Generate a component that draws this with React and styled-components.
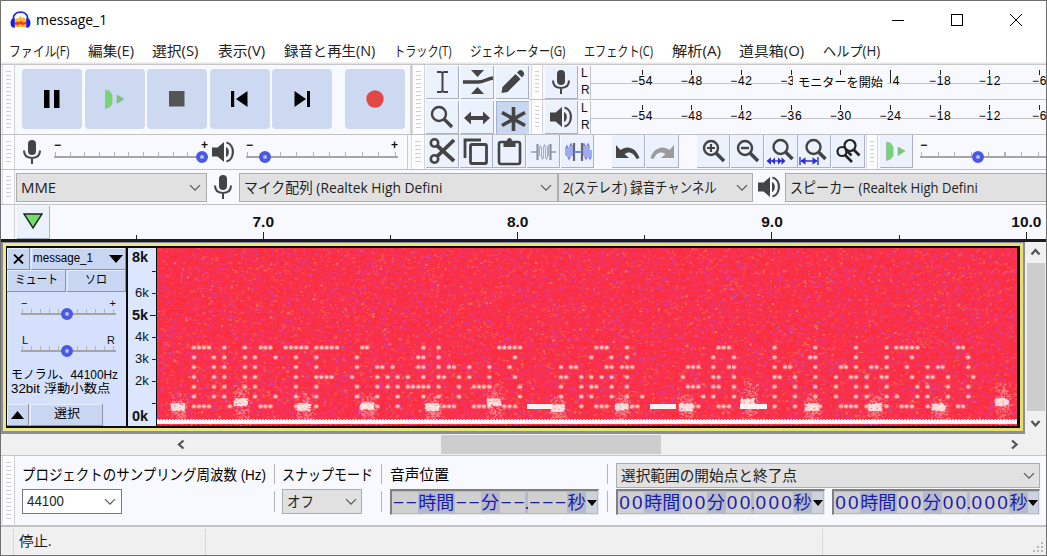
import React, { useLayoutEffect, useRef, useState, useMemo } from "react";
import styled, { createGlobalStyle, css } from "styled-components";

const GlobalStyle = createGlobalStyle`
  html, body { margin: 0; padding: 0; overflow: hidden; background: #fff; }
  * { box-sizing: border-box; }
  body { font-family: "Open Sans", "Noto Sans CJK JP", sans-serif; color: #1a1a1a; }
`;

const gothic = css`font-family: "Liberation Sans", "Noto Sans CJK JP", sans-serif;`;

/* ---------- text squeezed or stretched to a given width ---------- */
const FitBox = styled.span`
  display: inline-block;
  flex: none;
  width: ${(p) => p.$w}px;
  white-space: pre;
  line-height: 1.2;
`;
const FitInner = styled.span`
  display: inline-block;
  transform-origin: 0 50%;
`;
function Fit({ w, children, className }) {
  const ref = useRef(null);
  const [scale, setScale] = useState(1);
  useLayoutEffect(() => {
    const natural = ref.current.offsetWidth;
    if (natural) setScale(w / natural);
  }, [w, children]);
  return (
    <FitBox $w={w} className={className}>
      <FitInner ref={ref} style={{ transform: `scaleX(${scale})` }}>{children}</FitInner>
    </FitBox>
  );
}

/* ---------- window frame ---------- */
const Window = styled.div`
  position: relative;
  width: 1047px;
  height: 556px;
  display: flex;
  flex-direction: column;
  overflow: hidden;
  background: #fff;
  &::after {
    content: "";
    position: absolute;
    inset: 0;
    border: 1px solid #6e6e6e;
    pointer-events: none;
  }
`;
const TitleBar = styled.header`
  flex: none;
  height: 40px;
  display: flex;
  align-items: center;
  padding-left: 10px;
`;
const Title = styled(Fit)`
  font-size: 14.5px;
  margin-left: 5px;
  color: #000;
`;
const Controls = styled.div`
  margin-left: auto;
  display: flex;
  gap: 47px;
  padding-right: 25px;
`;
const MenuBar = styled.nav`
  flex: none;
  height: 22px;
  display: flex;
  align-items: center;
  gap: 18.7px;
  padding-left: 9px;
  font-size: 14px;
  color: #222;
`;
const Shade = styled.div`
  flex: none;
  height: 3px;
  background: linear-gradient(#fafafa, #e2e2e2 55%, #b8b8b8);
`;

/* ---------- toolbars ---------- */
const Strip = styled.div`
  flex: none;
  display: flex;
  height: ${(p) => p.$h}px;
  background: #f8f9ff;
  border-bottom: ${(p) => p.$line || 1}px solid #c2c2c2;
  overflow: hidden;
`;
const Handle = styled.div`
  flex: none;
  width: ${(p) => p.$w || 13}px;
  margin-left: ${(p) => p.$ml || 0}px;
  background: #fdfdff;
  border-left: 1px solid #dcdcdc;
  border-right: 1px solid #d4d4d4;
  padding: 6px 3px 5px;
  &::before {
    content: "";
    display: block;
    height: 100%;
    background: repeating-linear-gradient(#cfcfcf 0 1px, transparent 1px 4px);
  }
`;
const Transport = styled.div`
  flex: none;
  display: flex;
  align-items: center;
  gap: 2.5px;
  width: 397px;
  padding: 0 0 1px 7px;
  border-right: 2px solid #d0d0d0;
`;
const TransportButton = styled.button`
  width: 60px;
  height: 60px;
  padding: 0;
  border: 0;
  border-radius: 4px;
  background: #cdd9f1;
  display: grid;
  place-items: center;
  margin-left: ${(p) => (p.$gap ? 10 : 0)}px;
`;
const ToolGrid = styled.div`
  flex: none;
  display: grid;
  grid-template-columns: repeat(3, 33px);
  grid-auto-rows: 33px;
  gap: 2px;
  padding: 1px 0 0 1px;
`;
const ToolButton = styled.button`
  flex: none;
  width: 33px;
  height: 33px;
  padding: 0;
  margin-left: ${(p) => p.$ml || 0}px;
  margin-top: ${(p) => p.$mt || 0}px;
  display: grid;
  place-items: center;
  background: ${(p) => (p.$on ? "#c9d6f0" : "#ecf1fe")};
  border: 0 solid #a8b1c9;
  border-width: ${(p) => (p.$on ? "1px 0 0 1px" : "0 1px 1px 0")};
`;

/* ---------- level meters ---------- */
const Meters = styled.div`
  flex: 1;
  min-width: 0;
  display: flex;
  flex-direction: column;
`;
const Meter = styled.div`
  height: 35px;
  display: flex;
  border-bottom: 1px solid #c2c2c2;
`;
const Channels = styled.div`
  width: 16px;
  height: 34px;
  padding: 0 0 1px 3px;
  display: flex;
  flex-direction: column;
  justify-content: space-between;
  font: 12px/16px "Liberation Sans", sans-serif;
  color: #111;
`;
const Scale = styled.div`
  position: relative;
  flex: 1;
  display: flex;
  margin-top: 1px;
  padding-left: 26px;
  border-left: 1px solid #c4c4c4;
  background: linear-gradient(transparent 17px, #c6c6c6 17px 18px, transparent 18px);
`;
const Mark = styled.div`
  position: relative;
  flex: none;
  width: 49.7px;
  padding: 8px ${(p) => (p.$side === "left" ? 7 : 0)}px 0 ${(p) => (p.$side === "right" ? 13 : 1)}px;
  text-align: center;
  font: 12px/14px "Liberation Sans", sans-serif;
  letter-spacing: .6px;
  color: #000;
  &::before {
    content: "";
    position: absolute;
    left: 25px;
    top: 4px;
    width: 1px;
    height: ${(p) => (p.$side === "right" ? 13 : 5)}px;
    background: #222;
  }
`;
const MonitorHint = styled.div`
  position: absolute;
  left: 202px;
  top: 9px;
  width: 94px;
  height: 16px;
  padding-left: 5px;
  display: flex;
  align-items: center;
  background: #fafbff;
  font-size: 12px;
  color: #000;
`;

/* ---------- sliders ---------- */
const SliderBox = styled.div`
  flex: none;
  width: ${(p) => p.$w}px;
  margin-left: ${(p) => p.$ml || 0}px;
  padding-top: ${(p) => p.$pt || 0}px;
`;
const Ends = styled.div`
  display: flex;
  justify-content: space-between;
  padding: 0 ${(p) => p.$inset}px;
  height: 12px;
  margin-bottom: ${(p) => (p.$thin ? 0 : 1)}px;
  font: bold 12px/12px "Liberation Sans", sans-serif;
  font-weight: ${(p) => (p.$thin ? 400 : 700)};
  font-size: ${(p) => (p.$thin ? 11 : 12)}px;
  color: #111;
`;
const Groove = styled.div`
  position: relative;
  height: 6px;
  border-bottom: 2px solid #a5a5a5;
  background: repeating-linear-gradient(90deg, transparent 0 1px, #b4b4b4 1px 2px, transparent 2px ${(p) => p.$step}px);
`;
const Knob = styled.i`
  position: absolute;
  left: ${(p) => p.$at - 6}px;
  top: -1px;
  width: 12px;
  height: 12px;
  border-radius: 50%;
  border: 4px solid #4a58e6;
  background: #b9bbe0;
`;
function Slider({ w, ml, pt, at, step, ends = ["−", "+"], inset = 0, thin }) {
  return (
    <SliderBox $w={w} $ml={ml} $pt={pt}>
      <Ends $inset={inset} $thin={thin}>{ends.map((e) => <span key={e}>{e}</span>)}</Ends>
      <Groove $step={step}><Knob $at={at} /></Groove>
    </SliderBox>
  );
}
const Mixer = styled.div`
  flex: none;
  display: flex;
  width: 393px;
  border-right: 1px solid #cbcbcb;
`;
const IconCell = styled.div`
  flex: none;
  width: ${(p) => p.$w}px;
  display: grid;
  place-items: center;
`;

/* ---------- combo boxes ---------- */
const ComboBox = styled.div`
  flex: none;
  width: ${(p) => p.$w}px;
  height: ${(p) => p.$h || 29}px;
  margin-left: ${(p) => p.$ml || 0}px;
  margin-top: ${(p) => p.$mt || 0}px;
  padding: 0 ${(p) => p.$pr || 5}px 0 ${(p) => p.$pl || 4}px;
  display: flex;
  align-items: center;
  justify-content: space-between;
  background: ${(p) => (p.$white ? "#fff" : "#e1e1e1")};
  border: 1px solid ${(p) => (p.$white ? "#7a7a7a" : "#adadad")};
  font-size: ${(p) => p.$fs || 14.5}px;
  color: #222;
`;
const Chevron = () => (
  <svg width="12" height="8" viewBox="0 0 12 8"><path d="M1 1.2l5 5 5-5" fill="none" stroke="#555" strokeWidth="1.2" /></svg>
);
function Combo({ text, tw, arrow = true, ...rest }) {
  return (
    <ComboBox {...rest}>
      <Fit w={tw}>{text}</Fit>
      {arrow && <Chevron />}
    </ComboBox>
  );
}

/* ---------- timeline ---------- */
const Timeline = styled.div`
  flex: none;
  display: flex;
  height: 37px;
  background: #f8f9ff;
  border-bottom: 3px solid #1c1c20;
`;
const PinCell = styled.div`
  flex: none;
  width: 50px;
  padding: 1px 0 0 2px;
  margin-left: 14px;
  border-left: 1px solid #d4d4d4;
`;
const Seconds = styled.div`
  flex: 1;
  display: flex;
  overflow: hidden;
  padding-left: 8.500px;
`;
const Second = styled.div`
  position: relative;
  flex: none;
  width: 127.2px;
  height: 34px;
  padding-top: 7px;
  text-align: center;
  font: bold 15.5px/20px "Liberation Sans", sans-serif;
  color: #111;
  &::after {
    content: "";
    position: absolute;
    left: 63px;
    bottom: 0;
    width: 1px;
    height: ${(p) => (p.$major ? 7 : 4)}px;
    background: #222;
  }
`;

/* ---------- track ---------- */
const Workspace = styled.div`
  flex: none;
  height: 193px;
  display: flex;
  background: #f0f0f0;
`;
const TrackFrame = styled.div`
  flex: none;
  width: 1025px;
  height: 192px;
  border: solid #8d8d99;
  border-width: 1px 2px 3px 3px;
`;
const TrackGlow = styled.div`
  height: 100%;
  padding: 3px 3px 3px 3px;
  background: linear-gradient(135deg, #eee98a, #e6dd6c);
`;
const Track = styled.div`
  height: 100%;
  display: flex;
  background: #0c0c0c;
  padding: 2px 1px 2px 1px;
`;
const Panel = styled.div`
  flex: none;
  width: 119px;
  height: 178px;
  background: #d5e0fd;
  display: flex;
  flex-direction: column;
  color: #000;
`;
const PanelRow = styled.div`
  display: flex;
  gap: 1px;
  height: 22px;
  margin-top: ${(p) => p.$mt || 0}px;
`;
const PanelButton = styled.button`
  flex: none;
  width: ${(p) => p.$w}px;
  height: 22px;
  padding: 0 ${(p) => p.$pad || 0}px;
  border: 0 solid #8d94a6;
  border-width: 0 1px 1px 0;
  box-shadow: inset 1px 1px 0 #e6edff;
  background: #c9d6f2;
  display: flex;
  align-items: center;
  justify-content: ${(p) => (p.$spread ? "space-between" : "center")};
  font-size: 12px;
  color: #000;
  ${gothic}
`;
const Info = styled.div`
  ${gothic}
  display: flex;
  flex-direction: column;
  padding: 16px 0 0 4px;
  font-size: 12px;
  line-height: 14px;
`;
const InfoLine = styled(Fit)`
  height: 14px;
  line-height: 14px;
`;
const Ruler = styled.div`
  flex: none;
  width: 28px;
  height: 178px;
  margin: 0 1px 0 2px;
  background: #dde6ff;
  overflow: hidden;
`;
const Freq = styled.div`
  position: relative;
  height: ${(p) => p.$h}px;
  line-height: ${(p) => p.$lh || p.$h}px;
  font-family: "Liberation Sans", sans-serif;
  font-size: ${(p) => (p.$bold ? 14.5 : 13)}px;
  font-weight: ${(p) => (p.$bold ? 700 : 400)};
  padding-left: ${(p) => (p.$bold ? 4 : 7)}px;
  color: #111;
  &::after {
    content: "";
    display: ${(p) => (p.$tick ? "block" : "none")};
    position: absolute;
    right: 0;
    top: 11px;
    width: ${(p) => (p.$bold ? 6 : 4)}px;
    height: 1px;
    background: #222;
  }
`;
const ScrollColumn = styled.div`
  flex: none;
  width: 21px;
  margin-left: 1px;
  display: flex;
  flex-direction: column;
  align-items: center;
  padding: 5px 2px 6px 0;
`;
const ThumbV = styled.div`
  width: 18px;
  flex: 1;
  margin: 5px 0 7px;
  background: #cdcdcd;
`;
const ScrollRow = styled.div`
  flex: none;
  height: 21px;
  display: flex;
  align-items: center;
  padding: 0 27px 1px 176px;
  background: #f0f0f0;
  border-bottom: 1px solid #c6c6c6;
`;
const ThumbH = styled.div`
  width: 220px;
  height: 19px;
  margin: 0 auto 0 254px;
  background: #cdcdcd;
`;

/* ---------- selection bar ---------- */
const Group = styled.section`
  ${gothic}
  flex: none;
  width: ${(p) => p.$w}px;
  padding: 7px 0 0 ${(p) => p.$pl}px;
  display: flex;
  flex-direction: column;
  font-size: 15px;
  color: #000;
`;
const GroupLabel = styled.div`
  height: 24px;
  display: flex;
  align-items: center;
`;
const GroupFields = styled.div`
  display: flex;
  gap: 7px;
  margin-top: ${(p) => (p.$tight ? 1 : 2)}px;
`;
const Divider = styled.div`
  flex: none;
  width: 1px;
  height: 48px;
  margin-top: 8px;
  background: linear-gradient(#b4b4b8 20px, transparent 20px 27px, #b4b4b8 27px);
`;
const TimeBox = styled.div`
  flex: none;
  display: flex;
  align-items: center;
  width: ${(p) => p.$w}px;
  height: 26px;
  padding: 0 1px 0 0;
  border: solid;
  border-width: 2px 1px 1px 2px;
  border-color: #808080 #e6e6e6 #e6e6e6 #808080;
  background: #b4bac9;
`;
const Digits = styled.span`
  width: ${(p) => p.$n * 12.9}px;
  height: 21px;
  display: flex;
  justify-content: space-around;
  background: #d0d0d0;
  font: 19px/22px "Liberation Sans", sans-serif;
  color: #1a1aae;
`;
const Unit = styled.span`
  width: ${(p) => p.$w}px;
  display: flex;
  justify-content: center;
  ${gothic}
  font-size: 18px;
  line-height: 20px;
  color: #1a1aae;
`;
const Drop = styled.span`
  flex: 1;
  height: 21px;
  display: grid;
  place-items: center;
  background: #cdd2df;
`;
function TimeField({ d, w }) {
  const cells = (n) => <Digits $n={n}>{Array.from({ length: n }, (_, i) => <span key={i}>{d}</span>)}</Digits>;
  return (
    <TimeBox $w={w}>
      {cells(2)}<Unit $w={37}>時間</Unit>{cells(2)}<Unit $w={19}>分</Unit>
      {cells(2)}<Unit $w={3}>.</Unit>{cells(3)}<Unit $w={19}>秒</Unit>
      <Drop><svg width="10" height="6"><path d="M0 0h10L5 6z" fill="#000" /></svg></Drop>
    </TimeBox>
  );
}
const StatusBar = styled.footer`
  flex: 1;
  display: flex;
  align-items: flex-start;
  background: #f0f0f0;
  font-size: 14px;
  padding-top: 2px;
`;
const StatusCell = styled.div`
  width: ${(p) => p.$w}px;
  height: 25px;
  padding-left: 5px;
  display: flex;
  align-items: center;
  border-right: 1px solid #d7d7d7;
`;
const Grip = styled.div`
  margin: 13px 3px 0 auto;
  line-height: 0;
`;

/* ---------- icons ---------- */
const INK = "#444";
const Mic = () => (
  <svg width="20" height="26" viewBox="0 0 20 26">
    <rect x="6" y="1" width="8" height="15" rx="4" fill={INK} />
    <path d="M2 11.500c0 5 3.400 7.400 8 7.400s8-2.400 8-7.400M10 19v6" fill="none" stroke={INK} strokeWidth="2" />
  </svg>
);
const Speaker = () => (
  <svg width="24" height="24" viewBox="0 0 24 24">
    <path d="M1 7.500h5.500L13 2v20l-6.500-5.500H1z" fill={INK} />
    <path d="M15.500 2.500c8.500 2 8.500 17 0 19" fill="none" stroke={INK} strokeWidth="2.200" />
    <path d="M15 7v10c3.800-1.500 3.800-8.500 0-10" fill={INK} />
  </svg>
);
const Svg = ({ children, s = 30, w }) => (
  <svg width={w || s} height={s} viewBox={`0 0 ${w || s} ${s}`} fill="none" stroke={INK}>{children}</svg>
);
const lens = <><circle cx="13" cy="12" r="7" strokeWidth="2.400" /><path d="M18 17l8 8" strokeWidth="3.600" /></>;
const icons = {
  ibeam: <Svg><path d="M10 5h4l1.500 1L17 5h4M15.500 6v18M10 25h4l1.500-1 1.500 1h4" strokeWidth="2" /></Svg>,
  envelope: <Svg w={33}><path d="M10 3h13l-6.500 7zM10 27h13l-6.500-7z" fill={INK} stroke="none" /><path d="M2 15h15c6 0 8-3 15-4" strokeWidth="3.400" /></Svg>,
  draw: <Svg><path d="M4.500 26l1-6L18.500 7l5 5-13 13zM20 5.500l2.500-2.200c2-1 5.500 2 4.500 4.500L25 10.500z" fill={INK} stroke="none" /></Svg>,
  zoom: <Svg><circle cx="12" cy="12" r="7" strokeWidth="2.400" /><path d="M17 17l8 8" strokeWidth="3.400" /></Svg>,
  shift: <Svg><path d="M2 16l7-6.500v4.500h12V9.500l7 6.500-7 6.500V18H9v4.500z" fill={INK} stroke="none" /></Svg>,
  multi: <Svg><path d="M15.500 4v24M4 9.500l23 13M27 9.500l-23 13" strokeWidth="3.600" /></Svg>,
  cut: <Svg><circle cx="7.500" cy="7" r="3.700" strokeWidth="2.600" /><circle cx="7.500" cy="23" r="3.700" strokeWidth="2.600" /><path d="M10 9.500L27 25M10 20.500L27 4" strokeWidth="3.800" /></Svg>,
  copy: <Svg><path d="M4 22V4h16" strokeWidth="2.800" /><rect x="9.500" y="8.500" width="16" height="19" rx="1.500" strokeWidth="2.800" /></Svg>,
  paste: <Svg><rect x="5" y="6" width="21" height="22" rx="2" strokeWidth="2.600" /><path d="M9.500 11V5h3.500c0-4 5-4 5 0h3.500v6z" fill={INK} stroke="none" /></Svg>,
  trim: <Svg w={32}><path d="M4 16h6m13 0h6" stroke="#a9aec7" strokeWidth="2" /><path d="M10.500 8v16M23.500 8v16" stroke="#909298" strokeWidth="2.200" /><path d="M12.500 20v-8l1-2 1 2v9l1 2 1-2v-10l1-2 1 2v10l1 2 1-2v-10l1-2v11" stroke="#a9aec7" strokeWidth="1.100" /></Svg>,
  silence: <Svg w={32}><path d="M5 20v-8l1-2 1 2v9l1 2 1-2V10l1-2 1 2v10M22 20V10l1-2 1 2v11l1 2 1-2V10l1-2 1 2v11l1 2 1-2v-7" stroke="#7485ea" strokeWidth="1.300" /><path d="M13 7v18M21 7v18" stroke="#666" strokeWidth="2.200" /><path d="M13 16h8" stroke="#7485ea" strokeWidth="2" /></Svg>,
  undo: <Svg><path d="M3 9v13h13l-4.500-4c4-3 9-2 12 5l3-1C23 11 13.500 9 7.500 14z" fill={INK} stroke="none" /></Svg>,
  redo: <Svg><path d="M27 9v13H14l4.500-4c-4-3-9-2-12 5l-3-1C7 11 16.500 9 22.500 14z" fill="#9b9b9b" stroke="none" /></Svg>,
  zoomIn: <Svg>{lens}<path d="M9 12h8M13 8v8" strokeWidth="2.200" /></Svg>,
  zoomOut: <Svg>{lens}<path d="M9 12h8" strokeWidth="2.400" /></Svg>,
  zoomSel: <Svg w={32} s={32}><circle cx="15.500" cy="12" r="7" strokeWidth="2.400" /><path d="M20.500 17l7 7" strokeWidth="3.600" /><path d="M5 26h13" stroke="#2e2ed0" strokeWidth="1.400" /><path d="M1.500 26l4.500-3.700v7.400zM10 22.300v7.400L6.500 26zM13 22.300v7.400l3.500-3.700zM16.500 22.300l4 3.700-4 3.700z" fill="#2e2ed0" stroke="none" /></Svg>,
  zoomFit: <Svg w={32} s={32}><circle cx="15.500" cy="12" r="7" strokeWidth="2.400" /><path d="M20.500 17l7 7" strokeWidth="3.600" /><path d="M2 22v8M20 22v8M3 26h16" stroke="#2e2ed0" strokeWidth="1.400" /><path d="M2.500 26l5-3.700v7.400zM19.500 26l-5-3.700v7.400z" fill="#2e2ed0" stroke="none" /></Svg>,
  zoomToggle: <Svg><circle cx="17" cy="9.500" r="5.500" stroke="#222" strokeWidth="2.200" /><circle cx="9" cy="15.500" r="4.500" stroke="#222" strokeWidth="2.200" /><path d="M20.500 13.500l6 6M12 19l7 7M12.500 13.500l6 6" stroke="#222" strokeWidth="2.700" /></Svg>,
};
const PlayPair = () => (
  <svg width="22" height="20" viewBox="0 0 22 20">
    <path d="M1.500 1l4 1 2.500 4v9l-2.500 3-4 1.500z" fill="#76d573" stroke="#9db89d" strokeWidth=".8" />
    <path d="M13 6l7 4-7 4.500z" fill="#76c873" stroke="#93b193" strokeWidth=".6" />
  </svg>
);
const AppLogo = () => (
  <svg width="21" height="18" viewBox="0 0 21 18">
    <path d="M4.500 10l2-3 1.500 1 2-3 2 2 2-1 2.500 4-.5 6H5z" fill="#ffb52e" />
    <path d="M4.500 12l3-1.500 2 1 1.500-2 2 2 3.500-.5v2l-4 1-2-1-3 1-3-.5z" fill="#f0361c" />
    <path d="M3.300 9C3 3 6.500 1.200 10.500 1.200S18 3 17.700 9" fill="none" stroke="#1e2be0" strokeWidth="1.700" />
    <path d="M4.800 7.200v9.500C2 17 .5 15 .5 12s1.500-5 4.300-4.800zM16.200 7.200v9.500c2.800.3 4.300-1.700 4.300-4.700s-1.500-5-4.300-4.800z" fill="#1420dc" />
  </svg>
);

/* ---------- spectrogram ---------- */
const SpectroSvg = styled.svg`
  flex: none;
  display: block;
  background: #fa3046;
`;
const dotRows = [
  [[160, [102,117,132,147,193,255,302,316,331,377,393,408,424,439,469,485,500,515,531,607,621,790,836]], [440, [178,193,209,224,240,469,485,500,561,836,851,867]], [740, [104,226,348,440,469,485,500,516,532,654,669]]],
  [[160, [102,162,193,255,285,347,408,469,591,775,790,836]], [440, [225,454,514,561,820,882]], [740, [104,211,226,348,440,516,685]]],
  [[160, [102,162,193,255,285,408,469,591,652,667,698,775,790,836]], [440, [27,42,88,148,209,363,393,408,500,515,546,561,577,744,759,775,820,867,882]], [740, [104,135,150,226,303,318,348,394,410,440,501,563,594,608,685]]],
  [[160, [102,162,193,255,285,408,469,484,500,515,576,652,683,713,744,790,836]], [440, [12,57,88,148,225,363,378,424,454,485,515,561,729,820,836,882]], [740, [104,119,165,226,288,333,348,380,425,440,516,563,578,624,700]]],
  [[160, [102,162,193,255,285,408,469,591,652,683,713,744,759,775,790,805,836]], [440, [57,102,117,132,148,240,363,424,454,469,515,561,744,759,775,820,836,882]], [740, [104,165,226,288,348,380,440,532,563,624,685]]],
  [[160, [102,162,193,285,347,408,469,591,652,713,790,836]], [440, [57,240,363,424,454,515,561,607,790,820,882]], [740, [104,165,226,288,348,380,440,471,532,563,624,685]]],
  [[160, [102,117,132,147,210,302,316,331,408,469,607,621,636,652,713,805,836]], [440, [12,27,42,102,117,132,148,193,209,225,424,469,485,500,577,592,759,775,836,851,867]], [740, [104,165,240,303,318,333,348,380,440,485,500,516,563,654,669]]],
];
const rowY = [99.5, 109.3, 119, 129, 138.700, 148.500, 158.300];
const bursts = [[178,407],[241,402],[304,407],[367,406],[432,407],[494,402],[558,408],[622,407],[686,407],[748,402],[812,407],[875,407],[939,407],[1002,402]];

function Spectrogram() {
  const layers = useMemo(() => {
    let seed = 20417;
    const rnd = () => ((seed = (seed * 1664525 + 1013904223) % 4294967296) / 4294967296);
    const make = (n, maxW, tall = 0.5) => {
      let d = "";
      for (let i = 0; i < n; i++) {
        const x = (rnd() * 860).toFixed(1), y = (rnd() * 178).toFixed(1), w = (1 + rnd() * maxW).toFixed(1);
        const h = rnd() < tall ? 2 : 1.2;
        d += `M${x} ${y}h${w}v${h}h-${w}z`;
      }
      return d;
    };
    const spray = bursts.map(([x, y]) => {
      const high = y < 405;
      let d = "";
      for (let i = 0; i < 170; i++) {
        const px = x - 157 + (rnd() + rnd() - 1) * 10;
        const py = y - 247 + (rnd() + rnd() - 1) * (high ? 26 : 16);
        d += `M${px.toFixed(1)} ${py.toFixed(1)}h1.600v1h-1.600z`;
      }
      let c = "";
      for (let i = 0; i < 110; i++) {
        const px = x - 158 + (rnd() - 0.5) * 13;
        const py = y - 248.500 + (rnd() - 0.5) * 7;
        c += `M${px.toFixed(1)} ${py.toFixed(1)}h1.800v1.300h-1.800z`;
      }
      return [d, c];
    });
    return {
      noise: [
        ["#ef3470", make(8500, 2.800), 0.7],
        ["#ff2b34", make(6500, 3), 0.8],
        ["#f9624c", make(3600, 2.200), 0.65],
        ["#e03a98", make(3600, 1.800), 0.75],
        ["#cb40d0", make(1100, 1.400), 0.8],
        ["#f98c68", make(400, 1.800), 0.7],
        ["#8a6cf0", make(70, 1), 0.9],
      ],
      spray,
    };
  }, []);
  return (
    <SpectroSvg width="860" height="178" viewBox="0 0 860 178">
      {layers.noise.map(([c, d, o]) => <path key={c} d={d} fill={c} opacity={o} />)}
      {dotRows.map((segs, r) => segs.map(([origin, xs]) => xs.map((x) => {
        const cx = origin + x / 3 - 157;
        return (
          <g key={`${r}-${origin}-${x}`}>
            <ellipse cx={cx} cy={rowY[r]} rx="2.700" ry="2.600" fill="#fb8a86" opacity=".6" />
            <ellipse cx={cx} cy={rowY[r]} rx="1.800" ry="1.500" fill="#fcd6d0" opacity=".85" />
          </g>
        );
      })))}
      {layers.spray.map(([d, c], i) => (
        <g key={i}><path d={d} fill="#fdb4ac" opacity=".6" /><path d={c} fill="#fff2ee" opacity=".85" /></g>
      ))}
      <path d="M370 156h25v5h-25zM493 156h26v5h-26zM583 156h27v5H583z" fill="#fdf2f0" />
      <path d="M0 171.500h860" stroke="#fbd0cc" strokeDasharray="2 1" />
      <path d="M0 174h860" stroke="#fdf4f4" strokeWidth="4" />
      <path d="M0 177.500h860" stroke="#b81c2c" strokeDasharray="3 2" />
    </SpectroSvg>
  );
}

const menus = [["ファイル(F)", 60], ["編集(E)", 46], ["選択(S)", 46.500], ["表示(V)", 47.500], ["録音と再生(N)", 91.500], ["トラック(T)", 57.500], ["ジェネレーター(G)", 95], ["エフェクト(C)", 69], ["解析(A)", 49], ["道具箱(O)", 65], ["ヘルプ(H)", 57.500]];
const playLevels = [["−54"], ["−48"], ["−42"], ["−36"], ["−30"], ["−24"], ["−18"], ["−12"], ["−6"]];
/* the monitoring hint covers part of the scale on the recording meter */
const recordLevels = [["−54"], ["−48"], ["−42"], ["−3", "left"], [""], ["4", "right"], ["−18"], ["−12"], ["−6"]];
const seconds = ["", "7.0", "", "8.0", "", "9.0", "", "10.0"];
const arrowPaths = { up: "M1.500 7.500l4-4.500 4 4.500", down: "M1.500 3l4 4.500 4-4.500", left: "M7.500 1.500L3 5.500l4.500 4", right: "M3 1.500l4.500 4-4.500 4" };
const ArrowSvg = styled.svg`flex: none;`;
const Arrow = ({ dir }) => (
  <ArrowSvg width="11" height="11" viewBox="0 0 11 11"><path d={arrowPaths[dir]} fill="none" stroke="#555" strokeWidth="2.300" /></ArrowSvg>
);

export default function App() {
  return (
    <Window>
      <GlobalStyle />
      <TitleBar>
        <AppLogo />
        <Title w={71}>message_1</Title>
        <Controls>
          <svg width="12" height="12"><path d="M0 6.500h12" stroke="#000" /></svg>
          <svg width="12" height="12"><rect x=".5" y=".5" width="11" height="11" fill="none" stroke="#000" /></svg>
          <svg width="12" height="12"><path d="M0 0l12 12M12 0L0 12" stroke="#000" /></svg>
        </Controls>
      </TitleBar>
      <MenuBar>{menus.map(([t, w]) => <Fit key={t} w={w}>{t}</Fit>)}</MenuBar>
      <Shade />

      <Strip $h={70}>
        <Handle $ml={2} />
        <Transport>
          <TransportButton><svg width="16" height="18"><path d="M0 0h5.500v18H0zM10 0h5.500v18H10z" fill="#000" /></svg></TransportButton>
          <TransportButton><PlayPair /></TransportButton>
          <TransportButton><svg width="16" height="16"><rect width="15.500" height="15.500" fill="#555" /></svg></TransportButton>
          <TransportButton><svg width="17" height="16"><path d="M0 0h3.200v16H0zM16.500 0v16L5 8z" fill="#000" /></svg></TransportButton>
          <TransportButton><svg width="17" height="16"><path d="M13 0h3v16h-3zM.5 0v16L12 8z" fill="#000" /></svg></TransportButton>
          <TransportButton $gap><svg width="18" height="18"><circle cx="9" cy="9" r="8.700" fill="#e34848" /></svg></TransportButton>
        </Transport>
        <Handle />
        <ToolGrid>
          {["ibeam", "envelope", "draw", "zoom", "shift", "multi"].map((k) => (
            <ToolButton key={k} $on={k === "multi"}>{icons[k]}</ToolButton>
          ))}
        </ToolGrid>
        <Meters>
          {[<Mic />, <Speaker />].map((icon, i) => (
            <Meter key={i}>
              <Handle $w={12} $ml={2} />
              <ToolButton $ml={2} $mt={1}>{icon}</ToolButton>
              <Channels><span>L</span><span>R</span></Channels>
              <Scale>
                {(i ? playLevels : recordLevels).map(([l, side], n) => <Mark key={n} $side={side}>{l}</Mark>)}
                {i === 0 && <MonitorHint><Fit w={85}>モニターを開始</Fit></MonitorHint>}
              </Scale>
            </Meter>
          ))}
        </Meters>
      </Strip>

      <Strip $h={35}>
        <Handle $ml={2} />
        <Mixer>
          <IconCell $w={34}><Mic /></IconCell>
          <Slider w={154} ml={5} pt={4} at={148} step={14.7} />
          <IconCell $w={30}><Speaker /></IconCell>
          <Slider w={152} ml={8} pt={4} at={19} step={16.400} />
        </Mixer>
        <Handle $ml={3} $w={14} />
        {["cut", "copy", "paste", "trim", "silence"].map((k) => <ToolButton key={k} $ml={0.8}>{icons[k]}</ToolButton>)}
        {["undo", "redo"].map((k, i) => <ToolButton key={k} $ml={i ? 1 : 18}>{icons[k]}</ToolButton>)}
        {["zoomIn", "zoomOut", "zoomSel", "zoomFit", "zoomToggle"].map((k, i) => <ToolButton key={k} $ml={i ? 0.8 : 18}>{icons[k]}</ToolButton>)}
        <Handle $ml={1} $w={12} />
        <ToolButton $ml={2}><PlayPair /></ToolButton>
        <Slider w={140} ml={7} pt={4} at={58} step={16.700} ends={["−"]} />
      </Strip>

      <Strip $h={35}>
        <Handle $ml={2} />
        <Combo $w={191} $ml={1} $mt={3} text="MME" tw={35} />
        <IconCell $w={32}><Mic /></IconCell>
        <Combo $w={319} $mt={3} text="マイク配列 (Realtek High Defini" tw={198} />
        <Combo $w={195} $mt={3} text="2(ステレオ) 録音チャンネル" tw={154} $pr={4} />
        <IconCell $w={32}><Speaker /></IconCell>
        <Combo $w={280} $mt={3} text="スピーカー (Realtek High Defini" tw={188} arrow={false} />
      </Strip>

      <Timeline>
        <PinCell>
          <ToolButton><svg width="20" height="18" viewBox="0 0 20 18"><path d="M1 1h18l-9 14z" fill="#74dc6d" stroke="#222" strokeWidth="1.400" /></svg></ToolButton>
        </PinCell>
        <Seconds>{seconds.map((s, i) => <Second key={i} $major={!!s}>{s}</Second>)}</Seconds>
      </Timeline>

      <Workspace>
        <TrackFrame>
          <TrackGlow>
            <Track>
              <Panel>
                <PanelRow>
                  <PanelButton $w={23}><svg width="11" height="10"><path d="M1 .5l9 9M10 .5l-9 9" stroke="#000" strokeWidth="1.800" /></svg></PanelButton>
                  <PanelButton $w={95} $spread $pad={2}><Fit w={60}>message_1</Fit><svg width="14" height="8"><path d="M0 0h14L7 8z" /></svg></PanelButton>
                </PanelRow>
                <PanelRow>
                  <PanelButton $w={59}><Fit w={43}>ミュート</Fit></PanelButton>
                  <PanelButton $w={59}><Fit w={22}>ソロ</Fit></PanelButton>
                </PanelRow>
                <Slider w={95} ml={14} pt={5} at={46} step={9.100} thin />
                <Slider w={95} ml={14} pt={19} at={46} step={9.100} ends={["L", "R"]} inset={1} thin />
                <Info>
                  <InfoLine w={107}>モノラル、44100Hz</InfoLine>
                  <InfoLine w={99}>32bit 浮動小数点</InfoLine>
                </Info>
                <PanelRow $mt={8}>
                  <PanelButton $w={22}><svg width="13" height="8"><path d="M0 8h13L6.500 0z" /></svg></PanelButton>
                  <PanelButton $w={73}><Fit w={26}>選択</Fit></PanelButton>
                </PanelRow>
              </Panel>
              <Ruler>
                <Freq $h={12} $lh={19} $bold>8k</Freq>
                <Freq $h={22} $tick />
                <Freq $h={22} $tick>6k</Freq>
                <Freq $h={22} $tick $bold>5k</Freq>
                <Freq $h={22} $tick>4k</Freq>
                <Freq $h={22} $tick>3k</Freq>
                <Freq $h={22} $tick>2k</Freq>
                <Freq $h={16} $tick />
                <Freq $h={16} $bold>0k</Freq>
              </Ruler>
              <Spectrogram />
            </Track>
          </TrackGlow>
        </TrackFrame>
        <ScrollColumn><Arrow dir="up" /><ThumbV /><Arrow dir="down" /></ScrollColumn>
      </Workspace>
      <ScrollRow><Arrow dir="left" /><ThumbH /><Arrow dir="right" /></ScrollRow>

      <Strip $h={71} $line={2}>
        <Handle $ml={2} />
        <Group $w={259} $pl={7}>
          <GroupLabel><Fit w={244}>プロジェクトのサンプリング周波数 (Hz)</Fit></GroupLabel>
          <GroupFields><Combo $w={100} $h={25} $white $fs={14} text="44100" tw={37} $pr={5} /></GroupFields>
        </Group>
        <Divider />
        <Group $w={106} $pl={7}>
          <GroupLabel><Fit w={91}>スナップモード</Fit></GroupLabel>
          <GroupFields><Combo $w={80} $h={25} $fs={15} text="オフ" tw={27} $pr={4} /></GroupFields>
        </Group>
        <Divider />
        <Group $w={225} $pl={8}>
          <GroupLabel><Fit w={59}>音声位置</Fit></GroupLabel>
          <GroupFields><TimeField d="−" w={209} /></GroupFields>
        </Group>
        <Divider />
        <Group $w={435} $pl={8}>
          <Combo $w={424} $h={25} $fs={15} text="選択範囲の開始点と終了点" tw={176} $pr={4} />
          <GroupFields $tight><TimeField d="0" w={209} /><TimeField d="0" w={208} /></GroupFields>
        </Group>
      </Strip>

      <StatusBar>
        <StatusCell $w={14} />
        <StatusCell $w={192}><Fit w={33}>停止.</Fit></StatusCell>
        <StatusCell $w={617} />
        <Grip>
          <svg width="11" height="11" fill="#b8b8b8"><path d="M8 0h2v2H8zM8 4h2v2H8zM8 8h2v2H8zM4 4h2v2H4zM4 8h2v2H4zM0 8h2v2H0z" /></svg>
        </Grip>
      </StatusBar>
    </Window>
  );
}
